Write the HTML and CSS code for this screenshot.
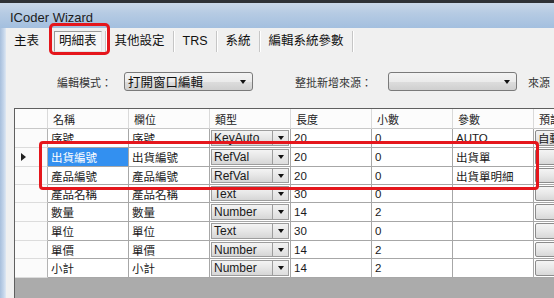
FILE: index.html
```html
<html>
<head>
<title>ICoder Wizard</title>
<meta charset="utf-8"/>
<link rel="stylesheet" href="styles.css">
</head>
<body>

<div class="window">
  <div class="topline"></div>
  <div class="titlebar">ICoder Wizard</div>

  <div class="main">
    <div class="frame"></div>
    <div class="content">

      <div class="tabs">
        <span class="tab first">主表</span>
        <span class="tab active">明細表</span>
        <span class="sep"></span>
        <span class="tab">其他設定</span>
        <span class="sep"></span>
        <span class="tab">TRS</span>
        <span class="sep"></span>
        <span class="tab">系統</span>
        <span class="sep"></span>
        <span class="tab">編輯系統參數</span>
        <span class="sep"></span>
      </div>

      <div class="form">
        <span class="label mode">編輯模式：</span>
        <div class="combo">
          <span class="combo-text">打開窗口編輯</span>
          <span class="arrow"></span>
        </div>
        <span class="label batch">整批新增來源：</span>
        <div class="combo">
          <span class="combo-text"></span>
          <span class="arrow"></span>
        </div>
        <span class="label source">來源</span>
      </div>

      <div class="grid">
        <!-- header -->
        <div class="hd corner"></div>
        <div class="hd">名稱</div>
        <div class="hd">欄位</div>
        <div class="hd">類型</div>
        <div class="hd">長度</div>
        <div class="hd">小數</div>
        <div class="hd">參數</div>
        <div class="hd">預設</div>

        <div class="rh"></div>
        <div class="c">序號</div>
        <div class="c">序號</div>
        <div class="c pick"><div class="box"><span>KeyAuto</span><span class="btn"><span class="arrow"></span></span></div></div>
        <div class="c">20</div>
        <div class="c">0</div>
        <div class="c">AUTO</div>
        <div class="c def"><div class="button">自動</div></div>

        <div class="rh"><span class="current"></span></div>
        <div class="c selected">出貨編號</div>
        <div class="c">出貨編號</div>
        <div class="c pick"><div class="box"><span>RefVal</span><span class="btn"><span class="arrow"></span></span></div></div>
        <div class="c">20</div>
        <div class="c">0</div>
        <div class="c">出貨單</div>
        <div class="c def"><div class="button"></div></div>

        <div class="rh"></div>
        <div class="c">產品編號</div>
        <div class="c">產品編號</div>
        <div class="c pick"><div class="box"><span>RefVal</span><span class="btn"><span class="arrow"></span></span></div></div>
        <div class="c">20</div>
        <div class="c">0</div>
        <div class="c">出貨單明細</div>
        <div class="c def"><div class="button"></div></div>

        <div class="rh"></div>
        <div class="c">產品名稱</div>
        <div class="c">產品名稱</div>
        <div class="c pick"><div class="box"><span>Text</span><span class="btn"><span class="arrow"></span></span></div></div>
        <div class="c">30</div>
        <div class="c">0</div>
        <div class="c"></div>
        <div class="c def"><div class="button"></div></div>

        <div class="rh"></div>
        <div class="c">數量</div>
        <div class="c">數量</div>
        <div class="c pick"><div class="box"><span>Number</span><span class="btn"><span class="arrow"></span></span></div></div>
        <div class="c">14</div>
        <div class="c">2</div>
        <div class="c"></div>
        <div class="c def"><div class="button"></div></div>

        <div class="rh"></div>
        <div class="c">單位</div>
        <div class="c">單位</div>
        <div class="c pick"><div class="box"><span>Text</span><span class="btn"><span class="arrow"></span></span></div></div>
        <div class="c">30</div>
        <div class="c">0</div>
        <div class="c"></div>
        <div class="c def"><div class="button"></div></div>

        <div class="rh"></div>
        <div class="c">單價</div>
        <div class="c">單價</div>
        <div class="c pick"><div class="box"><span>Number</span><span class="btn"><span class="arrow"></span></span></div></div>
        <div class="c">14</div>
        <div class="c">2</div>
        <div class="c"></div>
        <div class="c def"><div class="button"></div></div>

        <div class="rh"></div>
        <div class="c">小計</div>
        <div class="c">小計</div>
        <div class="c pick"><div class="box"><span>Number</span><span class="btn"><span class="arrow"></span></span></div></div>
        <div class="c">14</div>
        <div class="c">2</div>
        <div class="c"></div>
        <div class="c def"><div class="button"></div></div>
      </div>

    </div>
  </div>

  <!-- red highlight marks drawn over the screenshot -->
  <div class="mark mark-tab"></div>
  <div class="mark mark-rows"></div>
</div>

</body>
</html>
```

FILE: styles.css
```css
html, body {margin:0; padding:0; width:100%; height:100%; overflow:hidden;}
body {
 background: #f0f0f0;
 color: #1a1a1a;
 font: normal 12px "Liberation Sans", "Noto Sans CJK TC", sans-serif;
}

.window {
 position: relative;
 width: 554px;
 height: 298px;
 overflow: hidden;
 display: flex;
 flex-direction: column;
 background: #f0f0f0;
}

.topline {height:3px; background:#2e3136;}
.titlebar {
 height: 25px;
 box-sizing: border-box;
 padding: 7px 0 0 10px;
 background: linear-gradient(#c9d7e8, #b6cbe3 40%, #a3bfdf);
 font-size: 13px;
 color: #1c1c1c;
}

.main {flex:1; display:flex; min-height:0;}
.frame {
 width: 6px;
 background: linear-gradient(90deg, #a8bfdc, #c4d5ea 60%, #dfe8f3);
}
.content {flex:1; display:flex; flex-direction:column; min-width:0;}

/* tool tabs */
.tabs {
 height: 27px;
 display: flex;
 align-items: center;
 padding-left: 3px;
 font-size: 12.5px;
 color: #111;
 white-space: nowrap;
}
.tab {padding: 2px 5px; line-height:17px;}
.tab.first {margin-right: 10px;}
.tab.active {
 border: 1px solid #9a9a9a;
 border-right-color: #e4e4e4;
 border-bottom-color: #e4e4e4;
 background: #f7f7f7;
 padding: 1px 4px 1px 4px;
}
.sep {
 flex-shrink: 0;
 width: 1px;
 height: 21px;
 margin: 0 3px;
 background: #c6c6c6;
 border-right: 1px solid #fff;
}

/* editing mode row */
.form {
 height: 53px;
 display: flex;
 align-items: center;
 padding-left: 51px;
 font-size: 11px;
 color: #333;
 white-space: nowrap;
}
.form > * {flex-shrink: 0;}
.label.mode {margin-right: 12px;}
.label.batch {margin-left: 42px; margin-right: 16px;}
.label.source {margin-left: 11px;}
.combo {
 width: 129px;
 height: 19px;
 box-sizing: border-box;
 border: 1px solid #7a7a7a;
 border-radius: 3px;
 background: linear-gradient(#f3f3f3, #ebebeb 50%, #dddddd 51%, #cfcfcf);
 display: flex;
 align-items: center;
 justify-content: space-between;
 padding: 0 6px 0 3px;
 font-size: 12.5px;
 color: #111;
}
.arrow {
 width: 0; height: 0;
 border-left: 3.5px solid transparent;
 border-right: 3.5px solid transparent;
 border-top: 4px solid #111;
}

/* detail grid */
.grid {
 margin-left: 8px;
 flex: 1;
 border-top: 1px solid #5f5f5f;
 border-left: 1px solid #5f5f5f;
 background: #ababab;
 display: grid;
 grid-template-columns: 33px repeat(7, 81px);
 grid-template-rows: 20px 19px 19px 18px 18px 19px 19px 18px 19px;
 align-content: start;
 overflow: hidden;
 font-size: 11.5px;
}
.grid > div {
 box-sizing: border-box;
 border-right: 1px solid #a7a7a7;
 border-bottom: 1px solid #a7a7a7;
 background: #fff;
 white-space: nowrap;
 overflow: hidden;
 display: flex;
 align-items: center;
}
.hd {
 padding-left: 5px;
 background: #fcfcfc !important;
 border-right-color: #dadada !important;
 border-bottom-color: #c8c8c8 !important;
 color: #222;
 font-size: 11px;
}
.rh {background:#fbfbfb !important; border-right-color:#b3b3b3 !important; border-bottom-color:#dcdcdc !important;}
.c {padding-left: 3px; color:#1a1a1a;}
.c.selected {background:#3390f0 !important; color:#fff;}

.current {
 margin-left: 6px;
 width: 0; height: 0;
 border-top: 4.5px solid transparent;
 border-bottom: 4.5px solid transparent;
 border-left: 5px solid #222;
}

.c.pick, .c.def {padding: 1px;}
.box {
 flex: 1;
 height: 100%;
 box-sizing: border-box;
 display: flex;
 align-items: center;
 justify-content: space-between;
 border: 1px solid #9d9d9d;
 background: linear-gradient(#f4f4f4, #e6e6e6 50%, #d6d6d6);
 padding-left: 2px;
 font-size: 12px;
}
.btn {
 width: 15px;
 height: 100%;
 display: flex;
 align-items: center;
 justify-content: center;
 border-left: 1px solid #9d9d9d;
 background: linear-gradient(#f2f2f2, #dedede);
}
.button {
 flex: 1;
 height: 100%;
 box-sizing: border-box;
 border: 1px solid #8c8c8c;
 border-radius: 2px;
 background: linear-gradient(#f4f4f4, #e8e8e8 50%, #d8d8d8);
 padding-left: 2px;
 display: flex;
 align-items: center;
}

/* red marks */
.mark {
 position: absolute;
 border: 3px solid #e5161c;
 box-sizing: border-box;
}
.mark-tab {left:49px; top:23px; width:61px; height:32px; border-radius:5px;}
.mark-rows {left:39px; top:141px; width:500px; height:49px; border-radius:4px;}
```
